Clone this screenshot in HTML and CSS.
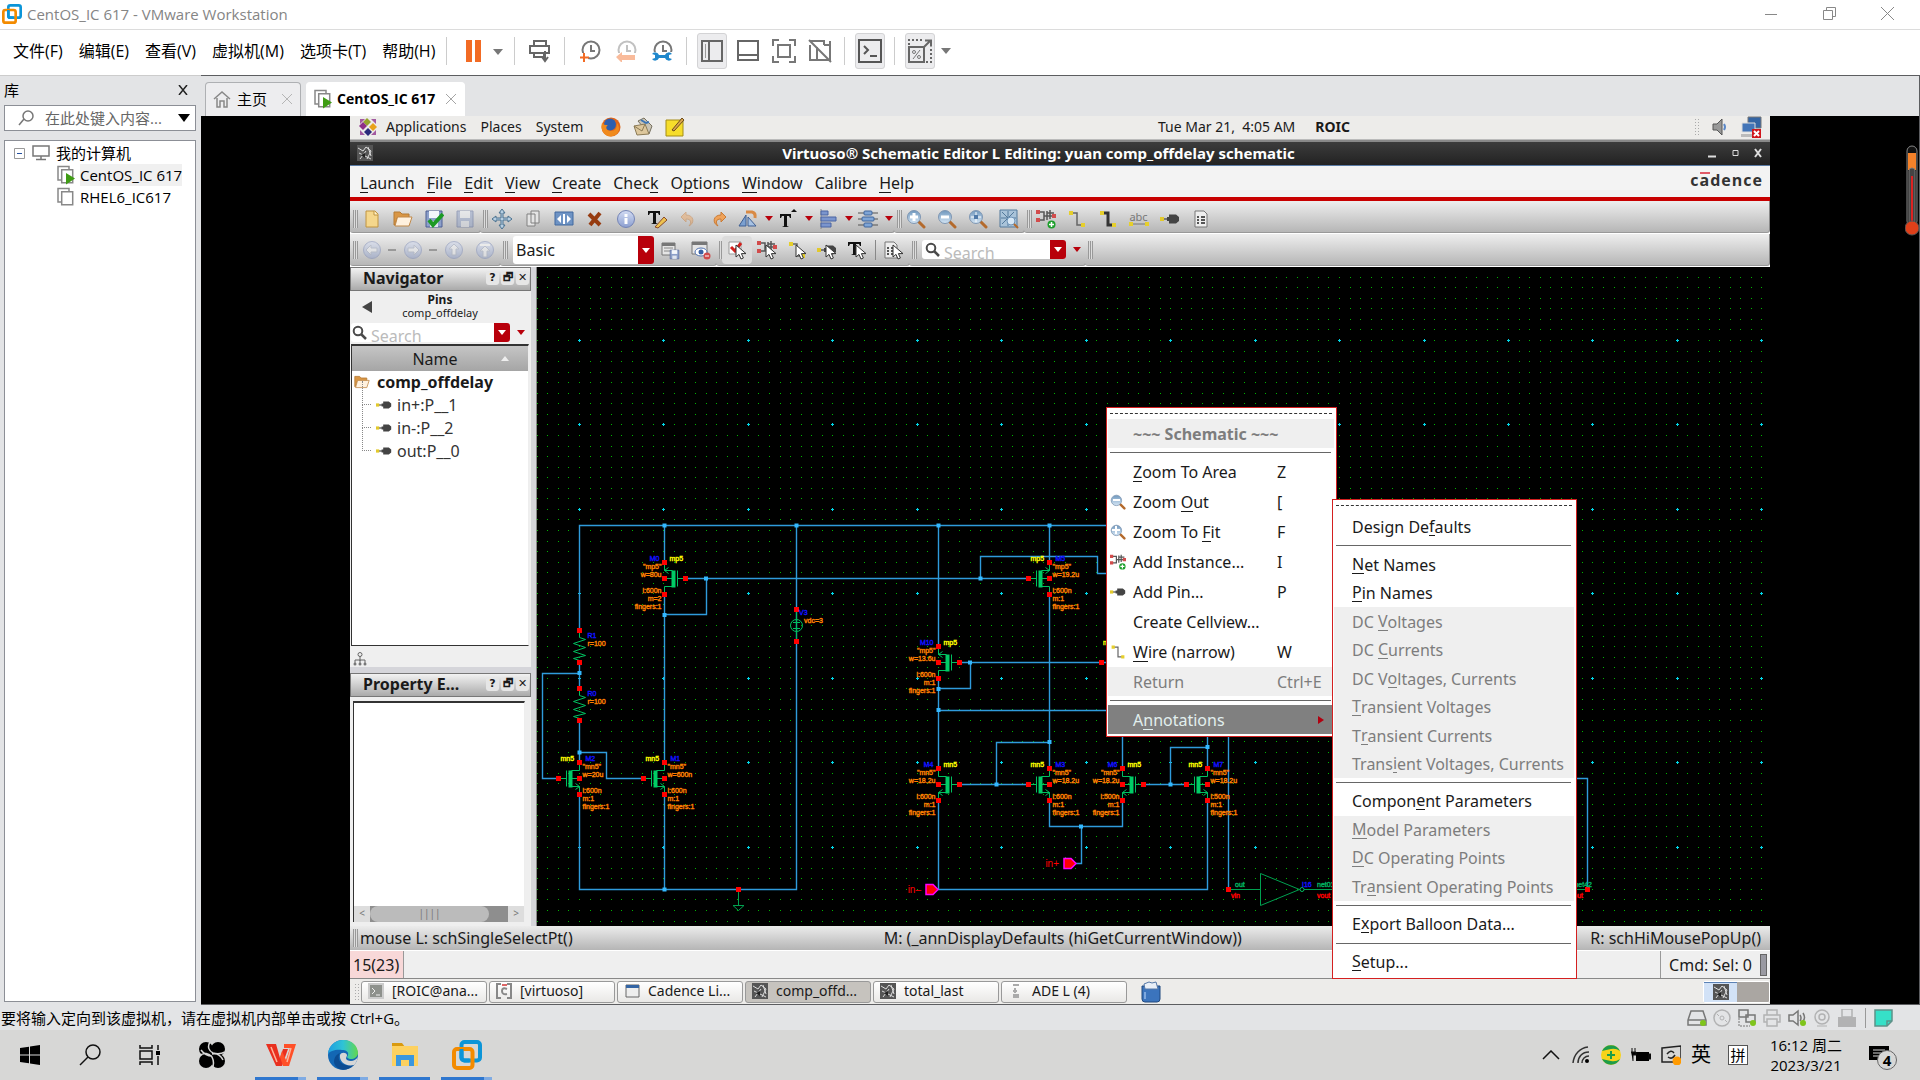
FILE: index.html
```
<!DOCTYPE html>
<html lang="zh-CN">
<head>
	<meta charset="UTF-8">
	<title>CentOS_IC 617 - VMware Workstation</title>
	<link rel="stylesheet" href="styles.css">
</head>
<body>

<!-- icons that are used more than once -->
<svg class="sprite" aria-hidden="true">
	<defs>
		<linearGradient id="lens" x1="0" y1="0" x2="0" y2="1"><stop offset="0" stop-color="#6f97bd"/><stop offset="1" stop-color="#d5e6f5"/></linearGradient>
		<linearGradient id="orb" x1="0" y1="0" x2="0" y2="1"><stop offset="0" stop-color="#d3dcf3"/><stop offset="1" stop-color="#8c9fd0"/></linearGradient>
		<linearGradient id="edge1" x1="0" y1="0" x2="1" y2="0"><stop offset="0" stop-color="#1f9ee0"/><stop offset=".5" stop-color="#2fc3d6"/><stop offset="1" stop-color="#63d84d"/></linearGradient>
	</defs>
	<symbol id="i-vmware" viewBox="0 0 30 30">
		<rect x="9.500" y="2" width="18.500" height="18.500" rx="3" fill="none" stroke="#0c95d8" stroke-width="4"/>
		<rect x="2" y="9" width="18.500" height="19" rx="3" fill="none" stroke="#f38b00" stroke-width="4"/>
		<path d="M9.500 9v8.500a3 3 0 0 0 3 3h5" fill="none" stroke="#0c95d8" stroke-width="4"/>
	</symbol>
	<symbol id="i-vm" viewBox="0 0 20 20">
		<path d="M5 15H2V1.500h11V4" fill="none" stroke="#888" stroke-width="1.500"/>
		<path d="M5.700 4.700h11v13h-11z" fill="#fff" stroke="#888" stroke-width="1.500"/>
	</symbol>
	<symbol id="i-play" viewBox="0 0 20 20"><path d="M10 8l9 5.500-9 6z" fill="#3f9c14"/></symbol>
	<symbol id="i-lens" viewBox="0 0 20 20">
		<path d="M12 12l6 6" stroke="#b46a2c" stroke-width="3" stroke-linecap="round"/>
		<circle cx="8" cy="8" r="6.500" fill="url(#lens)" stroke="#7f97b3"/>
	</symbol>
	<symbol id="i-glass" viewBox="0 0 16 16"><circle cx="6" cy="6" r="4.300" fill="none" stroke="#4b4b4b" stroke-width="2"/><path d="M9 9l5 5" stroke="#4b4b4b" stroke-width="2.500"/></symbol>
	<symbol id="i-inst" viewBox="0 0 20 20">
		<path d="M2 3h6v8H2M8 7h3M11 2v9M11 4h7M11 7h8M14 1v9" fill="none" stroke="#555" stroke-width="1.500"/>
		<path d="M0 1h4v4H0zM0 9h4v4H0zM16 5h4v4h-4z" fill="#d24b4b"/>
	</symbol>
	<symbol id="i-plus" viewBox="0 0 20 20"><circle cx="15.500" cy="15.500" r="4" fill="#1d9f2c"/><path d="M15.500 13v5M13 15.500h5" stroke="#fff" stroke-width="1.500"/></symbol>
	<symbol id="i-wire" viewBox="0 0 20 20">
		<path d="M4 4h6v12h6" fill="none" stroke="#666" stroke-width="1.500"/>
		<path d="M2 2h4v4H2zM14 14h4v4h-4z" fill="#e6cf2c"/>
	</symbol>
	<symbol id="i-pin" viewBox="0 0 20 20">
		<path d="M2 10h7" stroke="#777" stroke-width="2"/><path d="M0 8h4v4H0z" fill="#e2c92b"/>
		<path d="M7 8h2V5.500h7l3 2.500v4l-3 2.500H9V12H7z" fill="#444"/>
	</symbol>
	<symbol id="i-cursor" viewBox="0 0 20 20"><path d="M9 5v12l3-2.600 2 4.600 2.400-1-2-4.400H19z" fill="#fff" stroke="#333"/></symbol>
	<symbol id="i-sheet" viewBox="0 0 20 20"><path d="M4 2h9l3 3v13H4z" fill="#eee" stroke="#777"/><path d="M6 8h2M10 8h4M6 11h2M10 11h4M6 14h2M10 14h4" stroke="#555" stroke-width="2"/></symbol>
	<symbol id="i-disk" viewBox="0 0 20 20"><path d="M2 2h16v16H2z" fill="#8c9fc9" stroke="#4d5f94"/><path d="M5 2h10v7H5z" fill="#f3f6fb"/><path d="M6 12h8v6H6z" fill="#dfe4ee"/></symbol>
	<symbol id="i-folder" viewBox="0 0 20 20"><path d="M1 3h6l2 2h7v4H4L2 16H1z" fill="#d99645" stroke="#b57a35"/><path d="M4.500 8H19l-3 9H2z" fill="#fff1df" stroke="#c18a4b"/></symbol>
	<symbol id="i-orb" viewBox="0 0 20 20"><circle cx="10" cy="10" r="8.500" fill="url(#orb)" stroke="#7484b5"/></symbol>
	<symbol id="i-arrow" viewBox="0 0 20 20"><path d="M10 4l5 5h-3v6H8V9H5z" fill="#f5f7fb" stroke="#97a3bd"/></symbol>
	<symbol id="i-virt" viewBox="0 0 16 16"><path d="M0 0h16v16H0z" fill="#555"/><path d="M1 3l5 3 3-4 5 4-4 8M3 14l6-8M2 8l4 2 8 4M11 2l3 9" fill="none" stroke="#ddd"/><path d="M4 10l4-2v5z" fill="#222"/></symbol>
</svg>

<header class="titlebar">
	<svg class="icon20"><use href="#i-vmware"/></svg>
	<span class="title">CentOS_IC 617 - VMware Workstation</span>
	<button type="button" class="win" aria-label="最小化"><svg width="12" height="12"><path d="M0 6.500h12" stroke="#888"/></svg></button>
	<button type="button" class="win" aria-label="还原"><svg width="13" height="13"><path d="M.5 3.500h9v9h-9zM3.500 3.500v-3h9v9h-3" fill="none" stroke="#888"/></svg></button>
	<button type="button" class="win" aria-label="关闭"><svg width="13" height="13"><path d="M0 0l13 13M13 0L0 13" stroke="#888"/></svg></button>
</header>

<nav class="menubar">
	<button type="button">文件(F)</button>
	<button type="button">编辑(E)</button>
	<button type="button">查看(V)</button>
	<button type="button">虚拟机(M)</button>
	<button type="button">选项卡(T)</button>
	<button type="button">帮助(H)</button>
	<i class="sep"></i>
	<button type="button" class="tool pause" aria-label="挂起"><svg width="38" height="22"><path d="M1 0h6v22H1zM10 0h6v22h-6z" fill="#f26b24"/><path d="M28 9h10l-5 6z" fill="#777"/></svg></button>
	<i class="sep"></i>
	<button type="button" class="tool" aria-label="发送"><svg width="24" height="24"><path d="M6 7V2h12v5M2 7h19v7H2zM6 14v4h10v-4M17 12v9M14 18l3 4 3-4" fill="none" stroke="#666" stroke-width="2"/></svg></button>
	<i class="sep"></i>
	<button type="button" class="tool" aria-label="拍摄快照"><svg width="22" height="22"><circle cx="12" cy="10" r="8.500" fill="none" stroke="#777" stroke-width="2"/><path d="M12 5v6h4" fill="none" stroke="#777" stroke-width="2"/><path d="M0 13h9v9H0z" fill="#fff"/><path d="M5 13v9M1 17.500h9" stroke="#f26b24" stroke-width="2"/></svg></button>
	<button type="button" class="tool dim" aria-label="恢复快照"><svg width="22" height="22"><circle cx="12" cy="10" r="8.500" fill="none" stroke="#777" stroke-width="2"/><path d="M12 5v6h4" fill="none" stroke="#777" stroke-width="2"/><path d="M0 13h22v9H0z" fill="#fff"/><path d="M1 17l6-5v3h13v5H7v3z" fill="#f26b24"/></svg></button>
	<button type="button" class="tool" aria-label="管理快照"><svg width="22" height="22"><circle cx="12" cy="10" r="8.500" fill="none" stroke="#777" stroke-width="2"/><path d="M12 5v6h4" fill="none" stroke="#777" stroke-width="2"/><path d="M0 12h22v10H0z" fill="#fff"/><path d="M1 14a4 4 0 0 1 7 1h6a4 4 0 0 1 7-1l-3 1v3l3 1a4 4 0 0 1-7-1H8a4 4 0 0 1-7 1l3-1v-3z" fill="#2088cc"/></svg></button>
	<i class="sep"></i>
	<button type="button" class="tool on" aria-label="显示库"><svg width="22" height="22"><path d="M1 1h20v20H1zM8 1v20" fill="none" stroke="#666" stroke-width="2"/><path d="M4.500 4v14" stroke="#999"/></svg></button>
	<button type="button" class="tool" aria-label="缩略图栏"><svg width="22" height="22"><path d="M1 1h20v19H1zM1 15h20" fill="none" stroke="#666" stroke-width="2"/></svg></button>
	<button type="button" class="tool" aria-label="全屏"><svg width="24" height="24"><path d="M1 7V1h6M17 1h6v6M23 17v6h-6M7 23H1v-6M6 6h12v12H6z" fill="none" stroke="#777" stroke-width="2"/></svg></button>
	<button type="button" class="tool" aria-label="Unity"><svg width="24" height="24"><path d="M2 2h14v4M2 6v15h6M9 8v13h13V2M16 6h5M1 1l22 22" fill="none" stroke="#777" stroke-width="2"/></svg></button>
	<i class="sep"></i>
	<button type="button" class="tool on" aria-label="控制台"><svg width="24" height="24"><path d="M1 1h22v22H1zM6 7l4 4-4 4M12 17h7" fill="none" stroke="#555" stroke-width="2"/></svg></button>
	<i class="sep"></i>
	<button type="button" class="tool on" aria-label="拉伸"><svg width="24" height="24"><path d="M1 8h15v15H1zM16 8l6-6M17 1.500h6v6" fill="none" stroke="#666" stroke-width="2"/><path d="M1 6V1h13M23 10v13h-5" fill="none" stroke="#666" stroke-width="2" stroke-dasharray="2 2"/><path d="M5 20l7-9" stroke="#777"/><circle cx="6" cy="13" r="1.500" fill="none" stroke="#777"/><circle cx="11" cy="18" r="1.500" fill="none" stroke="#777"/></svg></button>
	<svg class="menucaret" width="10" height="6"><path d="M0 0h10L5 6z" fill="#777"/></svg>
</nav>

<main class="work">
	<aside class="library">
		<div class="libhead"><span>库</span><button type="button" aria-label="关闭库"><svg width="10" height="10"><path d="M1 0l8 10M9 0L1 10" stroke="#222" stroke-width="1.500"/></svg></button></div>
		<div class="libsearch">
			<svg width="18" height="18"><circle cx="11" cy="7" r="5" fill="none" stroke="#777" stroke-width="1.500"/><path d="M7 10l-5 6" stroke="#777" stroke-width="1.500"/></svg>
			<input type="text" aria-label="搜索库" placeholder="在此处键入内容...">
			<svg width="12" height="8"><path d="M0 0h12L6 8z"/></svg>
		</div>
		<ul class="vmtree">
			<li class="root"><svg width="11" height="11"><path d="M.5.500h10v10H.5z" fill="#fff" stroke="#999"/><path d="M3 5.500h5" stroke="#2350a0"/></svg><svg class="pc" width="18" height="16"><path d="M1 1h16v10H1zM9 11v3M4 14.500h10" fill="none" stroke="#777" stroke-width="1.500"/></svg>我的计算机</li>
			<li><svg class="icon20"><use href="#i-vm"/><use href="#i-play"/></svg><span class="picked">CentOS_IC 617</span></li>
			<li><svg class="icon20"><use href="#i-vm"/></svg><span>RHEL6_IC617</span></li>
		</ul>
	</aside>

	<section class="console">
		<div class="tabs">
			<button type="button" class="tab"><svg width="18" height="18"><path d="M1 9l8-7 8 7M4 8v9h3v-6h4v6h3V8" fill="none" stroke="#888" stroke-width="1.500"/></svg>主页<svg class="x" width="12" height="12"><path d="M1 1l10 10M11 1L1 11" stroke="#b5b5b5"/></svg></button>
			<button type="button" class="tab active"><svg class="icon20"><use href="#i-vm"/><use href="#i-play"/></svg>CentOS_IC 617<svg class="x" width="12" height="12"><path d="M1 1l10 10M11 1L1 11" stroke="#a5a5a5"/></svg></button>
		</div>

		<div class="screen">
			<svg class="thermo" width="14" height="92"><rect x="2" y="1" width="10" height="80" rx="5" fill="#111" stroke="#888"/><path d="M3 8h8v17H3z" fill="#f5822a"/><rect x="4" y="23" width="6" height="56" rx="3" fill="#444" stroke="#777"/><path d="M7 31v50" stroke="#d22" stroke-width="2"/><circle cx="7" cy="83" r="7" fill="#e0401a" stroke="#555"/></svg>

			<div class="guest" lang="en">
				<div class="gpanel">
					<svg class="apps" width="20" height="20"><path d="M9 1l4 4-4 4-4-4z" fill="#97a32c"/><path d="M1 9l4-4 4 4-4 4z" fill="#8e2f88"/><path d="M19 10l-4-4-4 4 4 4z" fill="#e8a21b"/><path d="M10 19l-4-4 4-4 4 4z" fill="#2c2b7b"/><path d="M2 2h5L2 7zM18 2v5l-5-5zM2 18v-5l5 5zM18 18h-5l5-5z" fill="#a35aa0"/></svg>
					<button type="button">Applications</button><button type="button">Places</button><button type="button">System</button>
					<button type="button" class="launch" aria-label="Firefox"><svg class="icon20" viewBox="0 0 20 20"><circle cx="10" cy="10" r="9.500" fill="#e0651a"/><circle cx="9" cy="7.500" r="6" fill="#2d5eae"/><path d="M1 6c2 2 3 2 6 2-3 2-2 6 3 6 4 0 6-3 6-8 4 5 2 13-6 13.500C3 19.500-1 13 1 6z" fill="#f08a1d"/></svg></button>
					<button type="button" class="launch" aria-label="Mail"><svg class="icon20" viewBox="0 0 20 20"><path d="M5 4l6-3 8 8-3 8z" fill="#c9c4b5" stroke="#77705f"/><path d="M1 9l11-2 4 10-12 1z" fill="#ddc79c" stroke="#8b7a55"/><path d="M1 9l8 5 3-7" fill="none" stroke="#8b7a55"/><path d="M8 3l5 3 3-1" stroke="#3c75b5" stroke-width="2" fill="none"/></svg></button>
					<button type="button" class="launch" aria-label="Notes"><svg class="icon20" viewBox="0 0 20 20"><path d="M1 3h17v16H1z" fill="#f6dd2b" stroke="#a48d16"/><path d="M7 13L17 1l2 2L9 14z" fill="#d9a64c" stroke="#6b4a1b"/></svg></button>
					<span class="clock">Tue Mar 21, &nbsp;4:05 AM</span><b class="user">ROIC</b>
					<i class="dots"></i>
					<svg class="vol" width="18" height="18"><path d="M2 6h4l5-5v16l-5-5H2z" fill="#999" stroke="#555"/><path d="M13 6q2 3 0 6" fill="none" stroke="#5b88c8" stroke-width="2"/></svg>
					<svg class="net" width="22" height="22"><path d="M8 1h13v11H8z" fill="#3465a4" stroke="#777"/><path d="M2 7h13v9H2z" fill="#4375b8" stroke="#ddd"/><path d="M1 18h14v3H1z" fill="#bbb"/><path d="M12 13h9v9h-9z" fill="#d0151b"/><path d="M14 15l5 5M19 15l-5 5" stroke="#fff" stroke-width="2"/></svg>
				</div>

				<div class="gtitle">
					<svg width="16" height="16"><use href="#i-virt"/></svg>
					<h1>Virtuoso® Schematic Editor L Editing: yuan comp_offdelay schematic</h1>
					<svg width="54" height="10"><path d="M0 8.500h8M47 1l6 8M53 1l-6 8" stroke="#ddd" stroke-width="2"/><path d="M25 2.500h5v5h-5z" fill="none" stroke="#ddd"/></svg>
				</div>

				<nav class="gmenu">
					<button type="button"><u>L</u>aunch</button><button type="button"><u>F</u>ile</button><button type="button"><u>E</u>dit</button><button type="button"><u>V</u>iew</button><button type="button"><u>C</u>reate</button><button type="button">Chec<u>k</u></button><button type="button">O<u>p</u>tions</button><button type="button"><u>W</u>indow</button><button type="button">Calibre</button><button type="button"><u>H</u>elp</button>
					<span class="logo">c<span class="bar">a</span>dence</span>
				</nav>

				<div class="tb upper">
					<div class="grp">
						<i class="grip"></i>
						<button type="button" aria-label="New"><svg class="ic"><path d="M4 2h9l3 3v13H4z" fill="#f5d78c" stroke="#c09440"/><path d="M12 2v4h4" fill="#fff3cd" stroke="#c09440"/></svg></button>
						<button type="button" aria-label="Open"><svg class="ic"><use href="#i-folder"/></svg></button>
						<button type="button" aria-label="Check and Save"><svg class="ic"><use href="#i-disk"/><path d="M5 11l4 5L19 5" fill="none" stroke="#1c9a24" stroke-width="4"/></svg></button>
						<button type="button" class="dim" aria-label="Save"><svg class="ic"><use href="#i-disk"/></svg></button>
					</div>
					<div class="grp">
						<i class="grip"></i>
						<button type="button" aria-label="Move"><svg class="ic"><path d="M10 0l3 4h-2v5h5V7l4 3-4 3v-2h-5v5h2l-3 4-3-4h2v-5H4v2l-4-3 4-3v2h5V4H7z" fill="#b8cfe2" stroke="#49708f"/></svg></button>
						<button type="button" aria-label="Copy"><svg class="ic"><path d="M8 2h8v12H8zM4 5h8v12H4z" fill="#e4e4e4" stroke="#808080"/></svg></button>
						<button type="button" aria-label="Stretch"><svg class="ic"><path d="M1 3h18v13H1z" fill="#6e93c4" stroke="#40699f"/><path d="M7 6v8l-4-4zM13 6v8l4-4zM9 5h2v10H9z" fill="#fff"/></svg></button>
						<button type="button" aria-label="Delete"><svg class="ic"><path d="M4 5l11 11M15 4L5 16" stroke="#963b10" stroke-width="4"/></svg></button>
						<button type="button" aria-label="Properties"><svg class="ic"><use href="#i-orb"/><path d="M10 5v3M10 9v6" stroke="#fff" stroke-width="3"/></svg></button>
						<button type="button" aria-label="Edit Label"><svg class="ic"><path d="M1 2h12v4h-1l-1-2H9v10l2 1H4l2-1V4H3L2 6H1z" fill="#111"/><path d="M8 18l9-10 3 3-9 8z" fill="#edc24f" stroke="#8a4a28"/></svg></button>
						<button type="button" class="dim" aria-label="Undo"><svg class="ic"><path d="M3 8l5-5v3c8 0 9 8 3 11 3-4 2-7-3-7v3z" fill="#f0a35a" stroke="#c87a34"/></svg></button>
						<button type="button" aria-label="Redo"><svg class="ic"><path d="M17 8l-5-5v3c-8 0-9 8-3 11-3-4-2-7 3-7v3z" fill="#f0a35a" stroke="#c87a34"/></svg></button>
						<button type="button" class="drop" aria-label="Rotate"><svg class="ic"><path d="M1 17L8 6v11z" fill="#7ba0d0" stroke="#3f5f92"/><path d="M10 8l8 9h-8z" fill="#a7c2e3" stroke="#3f5f92"/><path d="M8 3h6q4 1 3 6" fill="none" stroke="#d98a44" stroke-width="3"/></svg></button>
						<button type="button" class="drop" aria-label="Label"><svg class="ic"><path d="M2 5h11v4h-1l-1-2H9v10l2 1H4l2-1V7H4L3 9H2z" fill="#111"/><path d="M13 3l3-3 3 3z" fill="#111"/></svg></button>
						<button type="button" class="drop" aria-label="Align"><svg class="ic"><path d="M3 0v20" stroke="#888"/><path d="M3 2h7v4H3zM3 8h15v4H3zM3 14h10v4H3z" fill="#7b95cd" stroke="#4b64a3"/></svg></button>
						<button type="button" class="drop" aria-label="Distribute"><svg class="ic"><path d="M0 4h20M0 10h20M0 16h20" stroke="#555"/><rect x="6" y="2" width="8" height="4" rx="1" fill="#7fa5d6" stroke="#3f659c"/><rect x="4" y="8" width="12" height="4" rx="1" fill="#7fa5d6" stroke="#3f659c"/><rect x="6" y="14" width="8" height="4" rx="1" fill="#7fa5d6" stroke="#3f659c"/></svg></button>
					</div>
					<div class="grp">
						<i class="grip"></i>
						<button type="button" aria-label="Zoom In"><svg class="ic"><use href="#i-lens"/><path d="M8 4v8M4 8h8" stroke="#fff" stroke-width="3"/></svg></button>
						<button type="button" aria-label="Zoom Out"><svg class="ic"><use href="#i-lens"/><path d="M4 8h8" stroke="#fff" stroke-width="3"/></svg></button>
						<button type="button" aria-label="Zoom To Fit"><svg class="ic"><use href="#i-lens"/><path d="M8 3v10M3 8h10" stroke="#fff"/><path d="M6 6h4v4H6z" fill="#4f79a8"/></svg></button>
						<button type="button" aria-label="Zoom To Selected"><svg class="ic"><path d="M1 1h17v17H1z" fill="#a9c3d9" stroke="#53799b"/><path d="M3 3l12 12M15 3L3 15M9 2v15M2 9h15" stroke="#53799b"/><circle cx="12" cy="12" r="4" fill="#d7e8f6" stroke="#6f94b8"/><path d="M15 15l4 4" stroke="#b46a2c" stroke-width="2"/></svg></button>
					</div>
					<div class="grp last">
						<i class="grip"></i>
						<button type="button" aria-label="Create Instance"><svg class="ic"><use href="#i-inst"/><use href="#i-plus"/></svg></button>
						<button type="button" aria-label="Create Wire"><svg class="ic"><use href="#i-wire"/></svg></button>
						<button type="button" aria-label="Create Wide Wire"><svg class="ic"><path d="M4 4h6v12h6" fill="none" stroke="#333" stroke-width="3"/><path d="M2 2h4v4H2zM14 14h4v4h-4z" fill="#e6cf2c"/></svg></button>
						<button type="button" class="abc" aria-label="Wire Name">abc<svg width="20" height="4"><path d="M2 2h16" stroke="#777"/><path d="M0 0h4v4H0zM16 0h4v4h-4z" fill="#e6cf2c"/></svg></button>
						<button type="button" aria-label="Create Pin"><svg class="ic"><use href="#i-pin"/></svg></button>
						<button type="button" aria-label="Sheet"><svg class="ic"><use href="#i-sheet"/></svg></button>
					</div>
				</div>

				<div class="tb">
					<div class="grp">
						<i class="grip"></i>
						<button type="button" class="dim" aria-label="Back"><svg class="ic"><use href="#i-orb"/><path d="M4 10l5-5v3h6v4H9v3z" fill="#f5f7fb" stroke="#97a3bd"/></svg></button><i class="dash"></i>
						<button type="button" class="dim" aria-label="Forward"><svg class="ic"><use href="#i-orb"/><path d="M16 10l-5-5v3H5v4h6v3z" fill="#f5f7fb" stroke="#97a3bd"/></svg></button><i class="dash"></i>
						<button type="button" class="dim" aria-label="Up"><svg class="ic"><use href="#i-orb"/><use href="#i-arrow"/></svg></button>
						<button type="button" class="dim" aria-label="Top"><svg class="ic"><use href="#i-orb"/><path d="M5 4h10v2H5z" fill="#fff"/><use href="#i-arrow" y="2"/></svg></button>
					</div>
					<div class="grp">
						<i class="grip"></i>
						<div class="combo"><select aria-label="Workspace"><option>Basic</option></select></div>
						<button type="button" aria-label="Save Workspace"><svg class="ic"><path d="M2 3h13v12H2z" fill="#e5e5e5" stroke="#777"/><path d="M2 3h13v3H2z" fill="#777"/><path d="M4 8h9M4 11h9" stroke="#888"/><use href="#i-disk" x="9" y="9" width="11" height="11"/></svg></button>
						<button type="button" aria-label="Remove Workspace"><svg class="ic"><path d="M1 2h15v12H1z" fill="#e5e5e5" stroke="#777"/><path d="M1 2h15v3H1z" fill="#777"/><ellipse cx="10" cy="12" rx="6" ry="4" fill="#fff" stroke="#4d6fae"/><circle cx="10" cy="12" r="2.500" fill="#3a62a5"/><circle cx="16" cy="16" r="3.500" fill="#d04a4a"/><path d="M14 16h4" stroke="#fff"/></svg></button>
					</div>
					<div class="grp sel">
						<i class="grip"></i>
						<button type="button" class="on" aria-label="Select All"><svg class="ic"><path d="M2 2h12v12H2z" fill="#fff" stroke="#999"/><path d="M4 7l4 4 6-8" fill="none" stroke="#d2201c" stroke-width="3"/><use href="#i-cursor"/></svg></button>
						<button type="button" aria-label="Select Instance"><svg class="ic"><use href="#i-inst"/><use href="#i-cursor"/></svg></button>
						<button type="button" aria-label="Select Wire"><svg class="ic"><use href="#i-wire"/><use href="#i-cursor"/></svg></button>
						<button type="button" aria-label="Select Pin"><svg class="ic"><use href="#i-pin"/><use href="#i-cursor"/></svg></button>
						<button type="button" aria-label="Select Text"><svg class="ic"><path d="M1 2h13v4h-1l-1-2H9v10l2 1H4l2-1V4H3L2 6H1z" fill="#111"/><use href="#i-cursor"/></svg></button>
						<i class="bar1"></i>
						<button type="button" aria-label="Select Sheet"><svg class="ic"><use href="#i-sheet" x="-3"/><use href="#i-cursor"/></svg></button>
					</div>
					<div class="grp">
						<i class="grip"></i>
						<div class="find tbfind"><svg width="16" height="16"><use href="#i-glass"/></svg><input type="text" aria-label="Search design" placeholder="Search"><i class="red"></i></div>
						<i class="rc"></i>
					</div>
					<div class="grp last"><i class="grip"></i></div>
				</div>

				<div class="gmain">
					<div class="dock">
						<section class="pane nav">
							<h2>Navigator<span><button type="button">?</button><button type="button" aria-label="Float">🗗</button><button type="button" aria-label="Close">✕</button></span></h2>
							<div class="pins"><svg width="10" height="12"><path d="M10 0v12L0 6z" fill="#444"/></svg><div><b>Pins</b><small>comp_offdelay</small></div></div>
							<div class="navfind"><div class="find"><svg width="16" height="16"><use href="#i-glass"/></svg><input type="text" aria-label="Search pins" placeholder="Search"><i class="red"></i></div><i class="rc"></i></div>
							<div class="tree">
								<div class="colhead">Name<svg width="8" height="5"><path d="M0 5l4-5 4 5z" fill="#eee"/></svg></div>
								<p><svg width="16" height="16"><use href="#i-folder"/></svg><b>comp_offdelay</b></p>
								<ul>
									<li><svg width="16" height="16"><use href="#i-pin"/></svg>in+:P__1</li>
									<li><svg width="16" height="16"><use href="#i-pin"/></svg>in-:P__2</li>
									<li><svg width="16" height="16"><use href="#i-pin"/></svg>out:P__0</li>
								</ul>
							</div>
							<div class="navfoot"><svg width="14" height="14"><path d="M7 4v5M2 11V8h10v3M7 8v3" fill="none" stroke="#666"/><circle cx="7" cy="2.500" r="2" fill="none" stroke="#666"/><circle cx="2" cy="12" r="1.500" fill="#777"/><circle cx="7" cy="12" r="1.500" fill="#777"/><circle cx="12" cy="12" r="1.500" fill="#777"/></svg></div>
						</section>
						<section class="pane prop">
							<h2>Property E...<span><button type="button">?</button><button type="button" aria-label="Float">🗗</button><button type="button" aria-label="Close">✕</button></span></h2>
							<div class="propbox">
								<div class="scroll"><i class="sa">&lt;</i><i class="thumb">||||</i><i class="track"></i><i class="sa">&gt;</i></div>
							</div>
						</section>
					</div>
					<svg class="schematic" id="schematic" role="img" aria-label="comp_offdelay schematic"></svg>
				</div>

				<div class="status1"><i class="grip"></i><span>mouse L: schSingleSelectPt()</span><span class="mid">M: (_annDisplayDefaults (hiGetCurrentWindow))</span><span>R: schHiMousePopUp()</span></div>
				<div class="status2"><span class="count">15(23)</span><span class="cmd">Cmd: Sel: 0</span><i class="knob"></i></div>

				<div class="gtasks">
					<i class="dots"></i>
					<button type="button"><svg width="16" height="16"><path d="M1 1h14v14H1z" fill="#8e918c" stroke="#ccc" stroke-width="2"/><path d="M4 5l3 3-3 3M8 12h4" fill="none" stroke="#eee"/></svg>[ROIC@ana...</button>
					<button type="button"><svg width="16" height="16"><path d="M5 1H1v14h4M11 1h4v14h-4M11 6q-5-2-5 2t5 3" fill="none" stroke="#888" stroke-width="2"/><path d="M6 2h5" stroke="#d66" stroke-width="2"/></svg>[virtuoso]</button>
					<button type="button"><svg width="16" height="16"><path d="M2 2h13v12H2z" fill="#eee" stroke="#666"/><path d="M2 2h13v3H2z" fill="#3465a4"/></svg>Cadence Li...</button>
					<button type="button" class="cur"><svg width="16" height="16"><use href="#i-virt"/></svg>comp_offd...</button>
					<button type="button"><svg width="16" height="16"><use href="#i-virt"/></svg>total_last</button>
					<button type="button"><svg width="16" height="16"><path d="M5 2h6M7 5v5M5 8h4M5 12h6M5 14h6" stroke="#aaa" stroke-width="2"/></svg>ADE L (4)</button>
					<svg class="trash" width="20" height="22"><path d="M1 5h18v13q0 3-3 3H4q-3 0-3-3z" fill="#3b74bd" stroke="#21497f"/><path d="M4 8L3 3l5-2 3 1 4-1 2 7z" fill="#e9eff7" stroke="#5679a8"/><path d="M4 11v7" stroke="#7ea8de" stroke-width="2"/></svg>
					<div class="pager"><i><svg width="16" height="16"><use href="#i-virt"/></svg></i></div>
				</div>

				<!-- right-button popup and its submenu -->
				<div class="popup first">
					<i class="tear"></i>
					<button type="button" class="off head" disabled>~~~ Schematic ~~~</button>
					<hr>
					<button type="button"><span><u>Z</u>oom To Area</span><kbd>Z</kbd></button>
					<button type="button"><svg width="16" height="16"><use href="#i-lens"/><path d="M3 6h7" stroke="#fff" stroke-width="2"/></svg><span>Zoom <u>O</u>ut</span><kbd>[</kbd></button>
					<button type="button"><svg width="16" height="16"><use href="#i-lens"/><path d="M6 2v8M2 6h8" stroke="#fff" stroke-width="2"/></svg><span>Zoom To <u>F</u>it</span><kbd>F</kbd></button>
					<button type="button"><svg width="16" height="16"><use href="#i-inst"/><use href="#i-plus"/></svg><span>Add Instance...</span><kbd>I</kbd></button>
					<button type="button"><svg width="16" height="16"><use href="#i-pin"/></svg><span>Add Pin...</span><kbd>P</kbd></button>
					<button type="button"><span>Create Cellview...</span></button>
					<button type="button"><svg width="16" height="16"><use href="#i-wire"/></svg><span><u>W</u>ire (narrow)</span><kbd>W</kbd></button>
					<button type="button" class="off" disabled><span>Return</span><kbd>Ctrl+E</kbd></button>
					<hr>
					<button type="button" class="hot"><span>A<u>n</u>notations</span><svg class="more" width="6" height="8"><path d="M0 0l6 4-6 4z" fill="#b00010"/></svg></button>
				</div>
				<div class="popup second">
					<i class="tear"></i>
					<button type="button">Design De<u>f</u>aults</button>
					<hr>
					<button type="button"><u>N</u>et Names</button>
					<button type="button"><u>P</u>in Names</button>
					<button type="button" class="off" disabled>DC <u>V</u>oltages</button>
					<button type="button" class="off" disabled>DC <u>C</u>urrents</button>
					<button type="button" class="off" disabled>DC V<u>o</u>ltages, Currents</button>
					<button type="button" class="off" disabled><u>T</u>ransient Voltages</button>
					<button type="button" class="off" disabled>T<u>r</u>ansient Currents</button>
					<button type="button" class="off" disabled>Trans<u>i</u>ent Voltages, Currents</button>
					<hr>
					<button type="button">Compon<u>e</u>nt Parameters</button>
					<button type="button" class="off" disabled><u>M</u>odel Parameters</button>
					<button type="button" class="off" disabled><u>D</u>C Operating Points</button>
					<button type="button" class="off" disabled>Tr<u>a</u>nsient Operating Points</button>
					<hr>
					<button type="button">E<u>x</u>port Balloon Data...</button>
					<hr>
					<button type="button"><u>S</u>etup...</button>
				</div>
			</div>
		</div>
	</section>
</main>

<footer class="hostbar">
	<span>要将输入定向到该虚拟机，请在虚拟机内部单击或按 Ctrl+G。</span>
	<svg width="20" height="18"><path d="M4 2h12l3 9v5H1v-5zM1 11h18" fill="none" stroke="#777" stroke-width="1.500"/><circle cx="16" cy="14" r="3" fill="#7fc41c"/></svg>
	<svg class="faint" width="20" height="18"><circle cx="10" cy="9" r="8" fill="none" stroke="#777" stroke-width="1.500"/><circle cx="10" cy="9" r="2" fill="none" stroke="#777"/><path d="M5 5l2 2M13 11l2 2" stroke="#777"/></svg>
	<svg width="20" height="18"><path d="M2 1h9v7H2zM9 6h9v7H9z" fill="#e3e4e6" stroke="#777" stroke-width="1.500"/><path d="M2 9v8h11" fill="none" stroke="#777" stroke-dasharray="2 1"/><circle cx="16" cy="14" r="3" fill="#7fc41c"/></svg>
	<svg class="faint" width="20" height="18"><path d="M5 6V1h10v5M5 13H2V6h16v7h-3M5 10h10v7H5z" fill="none" stroke="#777" stroke-width="1.500"/></svg>
	<svg width="20" height="18"><path d="M2 6h4l5-4v14l-5-4H2zM13 6q2 3 0 6M16 4q3 5 0 8" fill="none" stroke="#777" stroke-width="1.500"/><circle cx="16" cy="14" r="3" fill="#7fc41c"/></svg>
	<svg class="faint" width="20" height="18"><circle cx="10" cy="8" r="7" fill="none" stroke="#777" stroke-width="1.500"/><circle cx="10" cy="8" r="3" fill="none" stroke="#777" stroke-width="1.500"/><path d="M5 17h10" stroke="#777"/></svg>
	<svg class="faint" width="20" height="18"><path d="M5 0h10v8H5z" fill="none" stroke="#777" stroke-width="1.500"/><path d="M1 8h18v10H1z" fill="#777"/></svg>
	<i class="hsep"></i>
	<svg class="note" width="20" height="18"><path d="M1 1h17v11l-5 5H1z" fill="#36e0c8" stroke="#5d9189" stroke-width="1.500"/><path d="M18 12h-5v5" fill="none" stroke="#5d9189" stroke-width="1.500"/></svg>
</footer>

<footer class="taskbar">
	<button type="button" aria-label="开始"><svg width="20" height="20"><path d="M0 3l9-1.300v7.800H0zM10 1.500L20 0v9.500H10zM0 10.500h9v7.800L0 17zM10 10.500h10V20l-10-1.500z"/></svg></button>
	<button type="button" aria-label="搜索"><svg width="22" height="22"><circle cx="14" cy="8" r="7" fill="none" stroke="#111" stroke-width="1.500"/><path d="M9 13l-8 8" stroke="#111" stroke-width="1.500"/></svg></button>
	<button type="button" aria-label="任务视图"><svg width="22" height="20"><path d="M1 0v3h12V0M1 20v-3h12v3M1 6h12v8H1zM19 0v5M19 11v9" fill="none" stroke="#111" stroke-width="1.500"/><path d="M17 6h4v4h-4z"/></svg></button>
	<button type="button" class="s" aria-label="启动器"><svg width="28" height="28" viewBox="0 0 28 28"><circle cx="8" cy="8" r="7"/><circle cx="20" cy="8" r="7"/><circle cx="8" cy="20" r="7"/><circle cx="20" cy="20" r="7"/><circle cx="14" cy="14" r="6"/><path d="M12 1c-3 5-1 9 3 11 4 1 8 1 12-1M1 15c5-4 10-3 13 1 2 4 2 8 0 12M14 13c5-1 9 2 11 6M14 15c-4 0-8-2-11-6" fill="none" stroke="#d6d6d6" stroke-width="1.500"/></svg></button>
	<button type="button" class="run more" aria-label="WPS"><svg width="30" height="24"><path d="M0 1h10l4 14 3-9h5l-6 17h-6z" fill="#e9301f"/><path d="M18 1h12l-7 22h-6l-3-9 2-6 4 9 4-12h-6z" fill="#ff5028"/><path d="M5 4l6 15M21 19l4-14" stroke="#ffb39b" stroke-width="1.500"/></svg></button>
	<button type="button" class="run more" aria-label="Edge"><svg width="30" height="30"><circle cx="15" cy="15" r="15" fill="#1367b4"/><path d="M0 14C1-4 29-5 30 13c0 6-9 8-11 4 3-4 0-7-5-7C8 9 2 11 0 14z" fill="url(#edge1)"/><path d="M12 13c-4 6 1 15 14 12-8 8-19 5-20-3 0-5 3-8 6-9z" fill="#0c4c92"/><path d="M12 15c1-3 6-3 7 0 0 2-2 3 0 5 4 2 8 1 11-3-1 4-2 6-4 8-9 2-15-4-14-10z" fill="#d6d6d6"/></svg></button>
	<button type="button" class="run" aria-label="文件资源管理器"><svg width="28" height="24"><path d="M1 0h10l3 4H1z" fill="#d99a10"/><path d="M1 3h26v20H1z" fill="#fdd160"/><path d="M5 23V12h18v11h-5v-6h-8v6z" fill="#3b97df"/></svg></button>
	<button type="button" class="run more" aria-label="VMware"><svg width="30" height="30"><use href="#i-vmware"/></svg></button>
	<div class="tray">
		<svg width="20" height="10"><path d="M2 9l8-8 8 8" fill="none" stroke="#111" stroke-width="1.500"/></svg>
		<svg width="20" height="18"><path d="M2 17C3 8 9 2 17 1M7 17c0-6 4-11 11-11M11 17c0-4 3-7 7-7" fill="none" stroke="#333" stroke-width="1.500"/><circle cx="16" cy="15" r="2"/></svg>
		<svg width="20" height="20"><circle cx="10" cy="10" r="10" fill="#f8d319"/><path d="M1 6A10 10 0 0 1 19 6q-4-3-9-2T1 6zM1 14a10 10 0 0 0 18 0q-4 3-9 2t-9-2z" fill="#1d9c4a"/><path d="M10 6v8M6 10h8" stroke="#1d9c4a" stroke-width="2"/></svg>
		<svg width="20" height="14"><path d="M5 4h13v9H5z"/><path d="M18 6h2v5h-2zM1 0v4M4 0v4M0 4h5v3H2v6" stroke="#111"/></svg>
		<svg width="20" height="20"><path d="M1 3l19-2v15l-8 1H1z" fill="none" stroke="#222" stroke-width="1.500"/><path d="M6 9q4-5 7-1M14 10q-3 5-7 2" fill="none" stroke="#222" stroke-width="1.500"/><circle cx="16" cy="16" r="4.500" fill="#ff9a00"/></svg>
		<span class="ying">英</span>
		<span class="pin">拼</span>
		<time class="when"><span>16:12 周二</span><span>2023/3/21</span></time>
		<button type="button" class="bell" aria-label="通知"><svg width="20" height="18"><path d="M0 0h20v14h-5v4l-4-4H0z"/><path d="M4 4h12M4 7h12M4 10h8" stroke="#d6d6d6"/></svg><b>4</b></button>
	</div>
</footer>

<script src="schematic.js"></script>
</body>
</html>
```
FILE: styles.css
```
* {
	box-sizing: border-box;
}

body {
	margin: 0;
	height: 100vh;
	display: flex;
	flex-direction: column;
	overflow: hidden;
	background: #e3e4e6;
	font: 15px/22px "Open Sans", "Noto Sans CJK SC", sans-serif;
	color: #000;
}

button, input, select {
	font: inherit;
	color: inherit;
	border: 0;
	padding: 0;
	margin: 0;
	background: none;
}

svg {
	flex: none;
}

.sprite {
	position: absolute;
	width: 0;
	height: 0;
}

.icon20 {
	width: 20px;
	height: 20px;
}

/* ---- host window ---- */

.titlebar {
	flex: none;
	height: 30px;
	display: flex;
	align-items: center;
	padding: 0 0 2px 2px;
	background: #fff;
	border-bottom: 1px solid #dcdcdc;
}

.title {
	flex: 1;
	padding-left: 5px;
	font-size: 15px;
	color: #858585;
}

.win {
	width: 58px;
	height: 28px;
	display: flex;
	align-items: center;
	justify-content: center;
}

.win:last-child {
	margin-right: 4px;
}

.menubar {
	flex: none;
	height: 45px;
	display: flex;
	align-items: center;
	padding: 0 0 3px 13px;
	background: #fff;
	font-size: 16px;
}

.menubar > button {
	margin-right: 16px;
}

.menubar .sep {
	width: 1px;
	height: 28px;
	background: #ccc;
	margin: 0 10px 0 -5px;
}

.menubar .tool {
	width: 30px;
	height: 36px;
	margin-right: 6px;
	display: flex;
	align-items: center;
	justify-content: center;
	border-radius: 3px;
}

.menubar .pause {
	width: 46px;
	margin-right: 8px;
	justify-content: flex-end;
}

.menubar .tool + .sep {
	margin: 0 10px 0 3px;
}

.menubar .on {
	background: #ececee;
	border: 1px solid #d3d3d5;
}

.dim {
	opacity: .45;
}

.work {
	flex: 1;
	min-height: 0;
	display: flex;
}

.library {
	width: 201px;
	display: flex;
	flex-direction: column;
	padding: 0 5px 3px 4px;
	border-top: 1px solid #ccc;
}

.libhead {
	height: 29px;
	display: flex;
	align-items: center;
	justify-content: space-between;
	padding: 0 8px 2px 0;
}

.libhead button {
	display: flex;
}

.libsearch {
	height: 26px;
	display: flex;
	align-items: center;
	gap: 10px;
	padding: 0 5px 0 12px;
	border: 1px solid #8c8f96;
	background: #fff;
}

.libsearch input {
	flex: 1;
	width: 0;
	outline: 0;
}

.libsearch input::placeholder {
	color: #666;
}

.vmtree {
	flex: 1;
	margin: 9px 0 0;
	padding: 1px 0 0 9px;
	list-style: none;
	background: #fff;
	border: 1px solid #8c8f96;
}

.vmtree li {
	height: 22px;
	padding-left: 42px;
	display: flex;
	align-items: center;
	gap: 4px;
}

.vmtree .root {
	padding-left: 0;
	gap: 6px;
}

.vmtree .root .pc {
	margin-left: 1px;
}

.picked {
	background: #f0f0f0;
}

.console {
	flex: 1;
	min-width: 0;
	display: flex;
	flex-direction: column;
	border: solid #5c5d60;
	border-width: 1px 1px 1px 0;
}

.tabs {
	height: 40px;
	display: flex;
	align-items: flex-end;
	gap: 5px;
	padding-left: 4px;
}

.tab {
	height: 34px;
	display: flex;
	align-items: center;
	gap: 6px;
	padding: 0 7px 2px;
	border: 1px solid #aeb0b3;
	border-bottom: 0;
	border-radius: 4px 4px 0 0;
	background: #ededef;
}

.tab .x {
	margin-left: 8px;
}

.tab.active {
	gap: 4px;
	padding: 0 7px 2px 6px;
	background: #fff;
	border-color: #fff;
	font-size: 14px;
	font-weight: bold;
}

.tab.active .x {
	margin-left: 6px;
}

/* ---- guest screen ---- */

.screen {
	flex: 1;
	min-height: 0;
	position: relative;
	background: #000;
	padding: 0 149px;
	display: flex;
}

.thermo {
	position: absolute;
	right: 0;
	top: 29px;
}

.guest {
	flex: 1;
	min-width: 0;
	position: relative;
	display: flex;
	flex-direction: column;
	background: #efefef;
	font-family: "Noto Sans", sans-serif;
	font-size: 16px;
	color: #1a1a1a;
}

.guest button {
	white-space: nowrap;
}

.gpanel {
	flex: none;
	height: 24px;
	display: flex;
	align-items: center;
	padding: 0 8px 1px;
	background: #edecea;
	border-bottom: 1px solid #bbb;
	font-size: 14px;
}

.gpanel button {
	margin-left: 14px;
}

.gpanel .apps + button {
	margin-left: 8px;
}

.gpanel .launch {
	display: flex;
	margin-left: 12px;
}

.gpanel .launch:nth-of-type(4) {
	margin-left: 18px;
}

.clock {
	margin-left: auto;
}

.user {
	margin: 0 344px 0 20px;
}

.dots {
	width: 5px;
	height: 18px;
	background: radial-gradient(#aaa 1px, transparent 1px) 0 0 / 3px 3px;
}

.gpanel .vol {
	margin: 0 11px 0 12px;
}

.gtitle {
	flex: none;
	height: 26px;
	display: flex;
	align-items: center;
	padding: 0 8px 1px 7px;
	background: linear-gradient(#3c3c3c, #222);
	border-top: 2px solid #888;
	border-bottom: 1px solid #5a7ba5;
	color: #fff;
}

.gtitle h1 {
	flex: 1;
	margin: 0;
	padding-right: 4px;
	text-align: center;
	font-size: 15px;
}

.gmenu {
	flex: none;
	height: 35px;
	display: flex;
	align-items: center;
	padding: 2px 7px 0 10px;
	background: #f3f3f3;
	border-bottom: 4px solid #c80000;
}

.gmenu button {
	margin-right: 12px;
}

u {
	text-decoration: none;
	border-bottom: 1px solid currentColor;
}

.guest u {
	display: inline-block;
	line-height: 17px;
}

.logo {
	margin-left: auto;
	align-self: flex-start;
	font: bold 16px/24px "Open Sans", sans-serif;
	letter-spacing: 1px;
	color: #333;
}

.logo .bar {
	display: inline-block;
	line-height: 12px;
	border-top: 2px solid #e05a68;
}

.tb {
	flex: none;
	height: 33px;
	display: flex;
	background: #fff;
}

.grp {
	height: 32px;
	margin-right: -1px;
	display: flex;
	align-items: center;
	background: linear-gradient(#eee, #b6b6b6);
	border-right: 1px solid #888;
	border-bottom: 1px solid #999;
	border-radius: 0 0 3px 3px;
}

.upper .grp {
	padding-top: 4px;
}

.grp.last {
	flex: 1;
	margin-right: 0;
}

.grip {
	flex: none;
	width: 5px;
	height: 18px;
	margin: 0 -2px 0 3px;
	background: repeating-linear-gradient(90deg, #999 0 1px, #ddd 1px 2px);
}

.grp button {
	width: 31px;
	height: 28px;
	display: flex;
	align-items: center;
	justify-content: center;
}

.ic {
	width: 20px;
	height: 20px;
}

.grp .drop {
	width: 40px;
	justify-content: flex-start;
	padding-left: 4px;
}

.drop::after, .rc {
	content: "";
	border: solid transparent;
	border-width: 5px 4px 0;
	border-top-color: #b8000b;
	margin-left: 7px;
}

.grp .abc {
	flex-direction: column;
	font-size: 11px;
	line-height: 11px;
	color: #777;
}

.dash {
	width: 8px;
	height: 2px;
	margin: 0 1px;
	background: #999;
}

.combo {
	width: 141px;
	height: 28px;
	margin-left: 7px;
	border-radius: 3px;
	border-right: 16px solid #b8000b;
	background: #fff;
	position: relative;
}

.combo::after, .red::after {
	content: "";
	position: absolute;
	right: -12px;
	top: 12px;
	border: solid transparent;
	border-width: 5px 4px 0;
	border-top-color: #fff;
}

.combo select {
	width: 100%;
	height: 28px;
	padding-left: 3px;
	appearance: none;
}

.grp.sel button {
	width: 30px;
}

.grp .on {
	background: #dcdcdc;
	border-radius: 4px;
}

.bar1 {
	width: 1px;
	height: 20px;
	margin: 0 3px;
	background: #888;
}

.find {
	height: 19px;
	display: flex;
	align-items: center;
	padding-left: 3px;
	background: #fff;
	border-radius: 3px;
	overflow: hidden;
}

.tbfind {
	width: 144px;
	margin-left: 7px;
}

.find input {
	flex: 1;
	width: 0;
	height: 24px;
	padding: 6px 0 0 3px;
	line-height: 18px;
}

.find input::placeholder {
	color: #bbb;
}

.find .red {
	position: relative;
	width: 16px;
	height: 19px;
	background: #b8000b;
}

.find .red::after {
	right: 4px;
	top: 7px;
}

.tbfind + .rc {
	margin-right: 4px;
}

/* docks on the left */

.gmain {
	flex: 1;
	min-height: 0;
	display: flex;
	background: #d5d5da;
}

.dock {
	width: 187px;
	padding-right: 5px;
	display: flex;
	flex-direction: column;
	gap: 6px;
	border-right: 1px solid #888;
}

.pane {
	display: flex;
	flex-direction: column;
	background: #efefef;
}

.nav {
	flex: 1;
	min-height: 0;
}

.pane h2 {
	flex: none;
	height: 24px;
	margin: 0;
	padding: 0 1px 2px 12px;
	display: flex;
	align-items: center;
	justify-content: space-between;
	background: linear-gradient(#f2f2f2, #aaa);
	border: 1px solid #777;
	font-size: 16px;
}

.pane h2 span {
	display: flex;
	gap: 2px;
}

.pane h2 button {
	width: 13px;
	height: 14px;
	background: #e6e6e6;
	border-radius: 3px;
	font: bold 11px/14px "DejaVu Sans", sans-serif;
}

.pins {
	height: 32px;
	display: flex;
	align-items: center;
	padding: 0 0 0 12px;
	font-size: 12px;
	line-height: 13px;
}

.pins div {
	flex: 1;
	display: flex;
	flex-direction: column;
	align-items: center;
	padding: 0 23px 2px 0;
}

.pins small {
	font-size: 11px;
}

.navfind {
	display: flex;
	align-items: center;
	padding-left: 1px;
}

.navfind .find {
	width: 159px;
	padding-left: 1px;
}

.tree {
	flex: 1;
	margin: 2px 2px 0 1px;
	border: 1px solid #333;
	border-top-width: 2px;
	border-right-color: #eee;
	background: #fff;
}

.colhead {
	height: 25px;
	display: flex;
	align-items: center;
	justify-content: center;
	padding-left: 41px;
	gap: 43px;
	background: linear-gradient(#c5c5c5, #a5a5a5);
}

.tree p {
	height: 22px;
	margin: 0;
	padding-left: 2px;
	display: flex;
	align-items: center;
	gap: 7px;
}

.tree ul {
	margin: 0 0 0 10px;
	padding: 0;
	list-style: none;
}

.tree li {
	height: 23px;
	display: flex;
	align-items: center;
	gap: 5px;
	color: #333;
}

.tree li::before {
	content: "";
	width: 8px;
	height: 23px;
	margin-top: -23px;
	border: dotted #888;
	border-width: 0 0 1px 1px;
}

.navfoot {
	height: 21px;
	padding: 3px 0 0 3px;
}

.prop {
	flex: none;
	height: 253px;
}

.propbox {
	flex: 1;
	margin: 4px 6px 4px 3px;
	border: 1px solid #333;
	border-width: 2px 1px 0;
	border-right-color: #eee;
	background: #fff;
	display: flex;
	align-items: flex-end;
}

.scroll {
	flex: 1;
	display: flex;
	height: 16px;
	background: #8e8e8e;
	line-height: 15px;
	text-align: center;
}

.scroll i {
	font-style: normal;
	font-size: 10px;
	color: #777;
}

.sa {
	width: 16px;
	background: #ddd;
}

.thumb {
	width: 119px;
	border-radius: 8px;
	background: #bbb;
}

.track {
	flex: 1;
}

.schematic {
	flex: 1;
	min-width: 0;
	height: 100%;
	background: #000;
	font: 7px "Liberation Sans", sans-serif;
}

.status1 {
	flex: none;
	height: 25px;
	display: flex;
	align-items: center;
	justify-content: space-between;
	padding-right: 9px;
	background: linear-gradient(#ececec, #b5b5b5);
	border-bottom: 1px solid #fff;
}

.status1 .grip + span {
	flex: 1;
	padding-left: 4px;
}

.status1 .mid {
	flex: 1;
	margin-right: 183px;
}

.status2 {
	flex: none;
	height: 28px;
	display: flex;
	align-items: stretch;
	line-height: 29px;
	border-bottom: 1px solid #888;
}

.count {
	width: 54px;
	padding-left: 3px;
	background: #f8d8d8;
	border-right: 1px solid #999;
}

.cmd {
	margin-left: auto;
	padding: 0 8px;
	border-left: 1px solid #999;
}

.knob {
	width: 7px;
	margin: 3px 3px 2px 0;
	background: #9a9aa2;
	border: 1px solid #666;
}

.gtasks {
	flex: none;
	height: 25px;
	display: flex;
	align-items: center;
	gap: 2px;
	padding-left: 4px;
	background: #edecea;
	font-size: 14px;
}

.gtasks button {
	width: 126px;
	height: 22px;
	display: flex;
	align-items: center;
	gap: 8px;
	padding: 0 0 1px 6px;
	background: linear-gradient(#fff, #e9e8e6);
	border: 1px solid #999;
	border-radius: 3px;
}

.gtasks .cur {
	background: #c6c3be;
}

.trash {
	margin-left: 12px;
}

.pager {
	width: 67px;
	height: 22px;
	margin-left: auto;
	background: #aaa6a2;
	border: 1px solid #fff;
	border-radius: 2px;
}

.pager i {
	display: flex;
	justify-content: center;
	align-items: center;
	width: 33px;
	height: 20px;
	background: #d2e2f7;
	border-top: 1px solid #5b82b5;
}

/* ---- popups ---- */

.popup {
	position: absolute;
	display: flex;
	flex-direction: column;
	background: #fff;
	border: 1px solid #d42020;
	padding: 0 2px 2px 1px;
}

.first {
	left: 756px;
	top: 291px;
	width: 231px;
}

.second {
	left: 982px;
	top: 383px;
	width: 245px;
	height: 480px;
}

.tear {
	flex: none;
	height: 6px;
	margin: 0 2px 5px;
	border-bottom: 1px dashed #333;
}

.second .tear {
	margin-bottom: 7px;
}

.popup button {
	height: 30px;
	display: flex;
	align-items: center;
	text-align: left;
	padding-left: 25px;
	white-space: pre;
}

.popup .off {
	height: 29px;
	background: #efefef;
	color: #7d7d7d;
}

.popup .head {
	font-weight: bold;
}

.popup hr {
	flex: none;
	height: 1px;
	width: calc(100% - 5px);
	margin: 4px 2px;
	border: 0;
	background: #666;
}

.popup button > svg:first-child {
	margin: 0 7px 0 -23px;
}

.popup kbd {
	width: 57px;
	margin-left: auto;
	font: inherit;
}

.popup .hot {
	height: 29px;
	background: #808080;
	color: #e2efee;
}

.popup .more {
	margin: 0 10px 0 auto;
}

.second button, .second .off {
	flex: 1;
	height: auto;
	padding-left: 18px;
}

/* ---- host status bar and taskbar ---- */

.hostbar {
	flex: none;
	height: 25px;
	display: flex;
	align-items: center;
	gap: 5px;
	padding: 0 26px 0 1px;
}

.hostbar span {
	flex: 1;
}

.faint {
	opacity: .45;
}

.hsep {
	width: 1px;
	height: 20px;
	margin: 0 3px;
	background: #999;
}

.taskbar {
	flex: none;
	height: 50px;
	display: flex;
	background: #d7d7d6;
}

.taskbar > button {
	width: 60px;
	display: flex;
	align-items: center;
	justify-content: center;
}

.taskbar > .s {
	width: 64px;
}

.taskbar > .run {
	width: 51px;
	margin-left: 11px;
	border-bottom: 3px solid #2f77cf;
	padding-top: 3px;
}

.taskbar > .more {
	border-image: linear-gradient(90deg, #2f77cf 80%, #7fabe3 80%) 3;
}

.tray {
	margin-left: auto;
	display: flex;
	align-items: center;
	gap: 10px;
	padding-right: 23px;
}

.ying {
	font-size: 20px;
}

.pin {
	width: 20px;
	height: 20px;
	margin-left: 7px;
	line-height: 18px;
	text-align: center;
	background: #fff;
	border: 1px solid #555;
}

.when {
	width: 76px;
	margin: 0 15px 0 10px;
	display: flex;
	flex-direction: column;
	align-items: center;
	line-height: 20px;
	white-space: nowrap;
}

.bell {
	position: relative;
	width: 28px;
	height: 30px;
}

.bell svg {
	display: block;
}

.bell b {
	position: absolute;
	right: 0;
	bottom: 0;
	width: 20px;
	height: 20px;
	border: 1px solid #666;
	border-radius: 50%;
	background: #d7d7d6;
	line-height: 18px;
}
```
FILE: schematic.js
```
// Draws the comp_offdelay sheet. Coordinates are sheet coordinates,
// the outer group moves the sheet origin to the corner of the view.
var out = [];
var ORIGIN_X = 537, ORIGIN_Y = 267;

function grid() {
	var minor = "", major = "";
	var step = 84.45 / 8;
	for (var i = -4; i < 114; i++) {
		for (var j = -7; j < 56; j++) {
			var x = Math.round(579 + i * step);
			var y = Math.round(340 + j * step);
			if (i % 8 == 0 && j % 8 == 0) {
				major += "M" + (x - 1) + " " + y + "h3v1h-3zM" + x + " " + (y - 1) + "h1v3h-1z";
			} else {
				minor += "M" + x + " " + y + "h1v1h-1z";
			}
		}
	}
	out.push('<path d="' + minor + '" fill="#00b400"/>');
	out.push('<path d="' + major + '" fill="#00d8e8"/>');
}

function wires(list) {
	list.forEach(function (d) {
		out.push('<path d="' + d + '" fill="none" stroke="#2f9bdc" stroke-width="1.4"/>');
	});
}

function pin(x, y) {
	out.push('<rect x="' + (x - 2.5) + '" y="' + (y - 2.5) + '" width="5" height="5" fill="#f00"/>');
}

function dot(x, y) {
	out.push('<rect x="' + (x - 2) + '" y="' + (y - 2) + '" width="4" height="4" fill="#33b8ff"/>');
}

function text(x, y, s, color, anchor) {
	out.push('<text x="' + x + '" y="' + y + '" fill="' + color + '" stroke="' + color + '" stroke-width=".4" text-anchor="' + (anchor || "start") + '">' + s + '</text>');
}

// side is -1 when the gate is on the left, 1 when it is on the right
function mos(x, y, side, kind, name, w, l, m) {
	var s = side;
	var p = kind == "mp5";
	var ay = p ? y - 8 : y + 8;
	out.push('<path d="M' + x + ' ' + (y - 16) + 'v8h' + s * 8 + 'M' + x + ' ' + (y + 16) + 'v-8h' + s * 8 +
		'M' + x + ' ' + y + 'h' + s * 8 + 'M' + (x + s * 13) + ' ' + (y - 8) + 'v16M' + (x + s * 13) + ' ' + y + 'h' + s * 8 +
		'M' + (x + s * 4) + ' ' + (ay - 3) + 'L' + x + ' ' + ay + 'l' + s * 4 + ' 3" fill="none" stroke="#00c060"/>');
	out.push('<rect x="' + (s > 0 ? x + 7 : x - 11) + '" y="' + (y - 8) + '" width="4" height="17" fill="#00cc66"/>');
	pin(x, y - 16);
	pin(x, y);
	pin(x, y + 16);
	pin(x + s * 21, y);
	text(x + (s > 0 ? 5 : -19), y - 18, kind, "#ff0");
	text(x + (s > 0 ? -5 : 6), y - 18, name, "#11f", s > 0 ? "end" : "start");
	var rows = ['"' + kind + '"', w, l, m, "fingers:1"];
	[-10, -2, 14, 22, 30].forEach(function (dy, i) {
		text(x + (s > 0 ? -3 : 3), y + dy, rows[i], "#ff8000", s > 0 ? "end" : "start");
	});
}

function resistor(x, y, name) {
	out.push('<path d="M' + x + ' ' + (y - 14) + 'v5l6 2-12 4 12 4-12 4 12 4-12 3 6 2v4" fill="none" stroke="#00c060"/>');
	pin(x, y - 16);
	pin(x, y + 16);
	text(x + 8, y - 9, name, "#11f");
	text(x + 8, y - 1, "r=100", "#ff8000");
}

grid();
wires([
	"M579.5 630V525.5H1110", "M579.5 662V689M579.5 720V763M579.5 794V889.5H796.5V525.5",
	"M579.5 673.5H542.5V778.5H558", "M579.5 752.5H606.5V778.5H643",
	"M664.500 525V563M664.500 594V763M664.500 794V889",
	"M684 578.500H1028M706.500 578V614.500H664",
	"M938.500 525V647M938.500 678V768M938.500 800V889.500H1207.500V800",
	"M959 662.500H1110M970.500 662V688.500H938M938 710.500H1110",
	"M959 784.500H1028M996.500 784V742.500H1049M1049.500 525V563M1049.500 594V768",
	"M980.500 578V556.500H1097.500V573.500H1110",
	"M1049.500 800V826.500H1122.500V800M1081.500 826V863.500H1076",
	"M1122.500 730V768M1144 784.500H1186M1170.500 784V747.500H1207M1207.500 730V768",
	"M1228.500 730V889", "M1570 778.500H1587.500V889"
]);

mos(664.5, 578.5, 1, "mp5", "M0", "w=80u", "l:600n", "m=2");
mos(579.5, 778.5, -1, "mn5", "M2", "w=20u", "l:600n", "m:1");
mos(664.5, 778.5, -1, "mn5", "M1", "w=600n", "l:600n", "m:1");
mos(1049.5, 578.5, -1, "mp5", "M5", "w=19.2u", "l:600n", "m:1");
mos(938.5, 662.5, 1, "mp5", "M10", "w=13.6u", "l:600n", "m:1");
mos(938.5, 784.5, 1, "mn5", "M4", "w=18.2u", "l:600n", "m:1");
mos(1049.5, 784.5, -1, "mn5", "M3", "w=18.2u", "l:600n", "m:1");
mos(1122.5, 784.5, 1, "mn5", "M6", "w=18.2u", "l:500n", "m:1");
mos(1207.5, 784.5, -1, "mn5", "M7", "w=18.2u", "l:500n", "m:1");
resistor(579.5, 646.5, "R1");
resistor(579.5, 704.5, "R0");

// supply
out.push('<path d="M796.500 610v31M793 622.500h7M793 628.500h7" stroke="#00c060"/><circle cx="796.500" cy="625.500" r="6" fill="none" stroke="#00c060"/>');
pin(796.5, 609.5);
pin(796.5, 641.5);
text(799, 615, "V3", "#11f");
text(804, 623, "vdc=3", "#ff8000");

// ground
out.push('<path d="M738.500 890v15M733 905.500h11l-5.500 5z" fill="none" stroke="#00a050"/>');
pin(738.5, 889.5);

// inverter
out.push('<path d="M1229 889.500h31M1260.500 873.500v32l39-16zM1304 889.500h30M1570 889.500h17" fill="none" stroke="#00a050"/><circle cx="1302" cy="889.500" r="2" fill="none" stroke="#00c060"/>');
pin(1228.5, 889.5);
pin(1587.5, 889.5);
pin(1101.5, 662.5);
text(1235, 887, "out", "#00b060");
text(1231, 898, "vin", "#f00");
text(1302, 887, "I16", "#11f");
text(1317, 887, "net01", "#00b060");
text(1317, 898, "vout", "#f00");
text(1592, 887, "net42", "#00b060", "end");
text(1583, 898, "vout", "#f00", "end");
text(1103, 645, "mp5", "#ff0");

// input ports
[[1064, 863.5, "in+"], [926, 889.5, "in–"]].forEach(function (p) {
	out.push('<path d="M' + p[0] + ' ' + (p[1] - 5) + 'h7l5 5-5 5h-7z" fill="#f00" stroke="#f0f" stroke-width="1.500"/>');
	out.push('<text x="' + (p[0] - 5) + '" y="' + (p[1] + 3) + '" fill="#f00" text-anchor="end" font-size="10">' + p[2] + '</text>');
});

[[664.5, 525.5], [796.5, 525.5], [938.5, 525.5], [1049.5, 525.5], [706, 578.5], [664.5, 615], [579.5, 673], [579.5, 752.5],
	[664.5, 889.5], [980.5, 578.5], [970, 662.5], [938.5, 689], [938.5, 710], [996.5, 784.5], [1049.5, 742], [1081, 826.5],
	[1170.5, 784.5], [1207.5, 747]].forEach(function (p) {
	dot(p[0], p[1]);
});

document.querySelector("#schematic").innerHTML =
	'<g transform="translate(' + -ORIGIN_X + ' ' + -ORIGIN_Y + ')">' + out.join("") + '</g>';
```
